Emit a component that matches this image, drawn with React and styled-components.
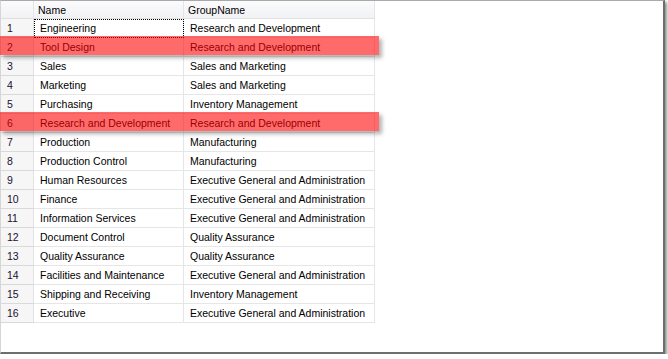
import React from 'react';
import styled, { createGlobalStyle } from 'styled-components';

const GlobalStyle = createGlobalStyle`
  body {
    margin: 0;
    background: #ffffff;
    font-family: "Liberation Sans", Arial, sans-serif;
  }
`

const Frame = styled.div`
  box-sizing: border-box;
  width: 665px;
  height: 354px;
  background: #ffffff;
  border-top: 1px solid #a9a9a9;
  border-left: 1px solid #d6d6d6;
  border-right: 2px solid #6e6e6e;
  border-bottom: 2px solid #6e6e6e;
  box-shadow: 2px 2px 3px rgba(0, 0, 0, 0.45);
`

const Grid = styled.div`
  display: grid;
  grid-template-columns: 33px 150px 191px;
  width: 374px;
  font-size: 10.5px;
  color: #000000;
`

const HeaderCell = styled.div`
  box-sizing: border-box;
  height: 18px;
  padding-left: ${p => (p.$corner ? 0 : 4)}px;
  display: flex;
  align-items: center;
  background: linear-gradient(#fbfbfc, #f1f2f4);
  border-right: 1px solid #e4e5e8;
  border-bottom: 1px solid #e0e0e0;
`

const Row = styled.div`
  display: contents;
`

const NumCell = styled.div`
  box-sizing: border-box;
  height: 19px;
  padding-left: 6px;
  display: flex;
  align-items: center;
  background: #f6f6f6;
  border-right: 1px solid #e2e2e2;
  border-bottom: 1px solid #d9d9d9;
  color: #1a1030;
  position: relative;
`

const Cell = styled.div`
  box-sizing: border-box;
  height: 19px;
  padding-left: 6px;
  display: flex;
  align-items: center;
  border-right: 1px solid #e6e6e6;
  border-bottom: 1px solid #e6e6e6;
  outline: ${p => (p.$focus ? '1px dotted #000' : 'none')};
  outline-offset: -1px;
  white-space: nowrap;
`

const Highlight = styled.div`
  position: absolute;
  left: -1px;
  top: -2px;
  width: 379px;
  height: 19px;
  background: rgba(255, 0, 0, 0.58);
  box-shadow: 3px 3px 4px rgba(0, 0, 0, 0.3);
  pointer-events: none;
  z-index: 2;
`

const rows = [
  ['Engineering', 'Research and Development'],
  ['Tool Design', 'Research and Development', true],
  ['Sales', 'Sales and Marketing'],
  ['Marketing', 'Sales and Marketing'],
  ['Purchasing', 'Inventory Management'],
  ['Research and Development', 'Research and Development', true],
  ['Production', 'Manufacturing'],
  ['Production Control', 'Manufacturing'],
  ['Human Resources', 'Executive General and Administration'],
  ['Finance', 'Executive General and Administration'],
  ['Information Services', 'Executive General and Administration'],
  ['Document Control', 'Quality Assurance'],
  ['Quality Assurance', 'Quality Assurance'],
  ['Facilities and Maintenance', 'Executive General and Administration'],
  ['Shipping and Receiving', 'Inventory Management'],
  ['Executive', 'Executive General and Administration'],
]

export default function App() {
  return (
    <>
      <GlobalStyle />
      <Frame>
        <Grid>
          <HeaderCell $corner />
          <HeaderCell>Name</HeaderCell>
          <HeaderCell>GroupName</HeaderCell>
          {rows.map(([name, group, marked], i) => (
            <Row key={i}>
              <NumCell>
                {i + 1}
                {marked && <Highlight />}
              </NumCell>
              <Cell $focus={i === 0}>{name}</Cell>
              <Cell>{group}</Cell>
            </Row>
          ))}
        </Grid>
      </Frame>
    </>
  );
}
